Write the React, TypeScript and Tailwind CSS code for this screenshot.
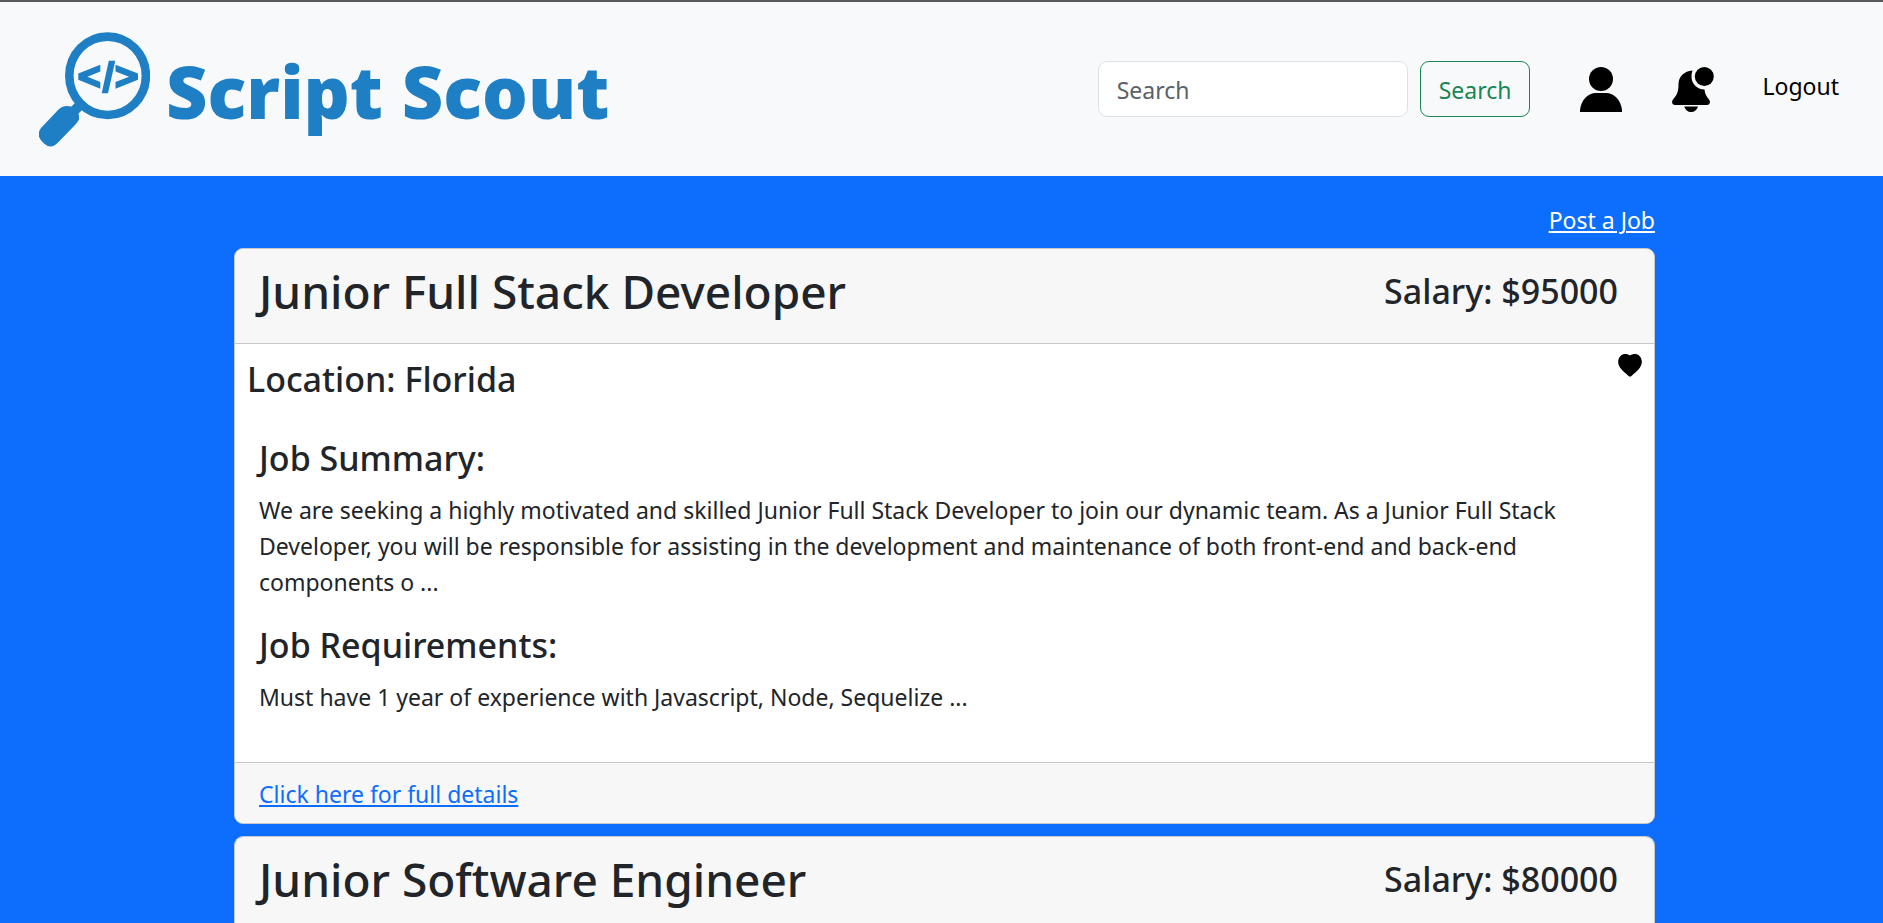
type JobDetails = {
  location: string;
  summary: string;
  requirements: string;
};

type Job = {
  title: string;
  salary: number;
  details?: JobDetails;
};

const jobs: Job[] = [
  {
    title: 'Junior Full Stack Developer',
    salary: 95000,
    details: {
      location: 'Florida',
      summary:
        'We are seeking a highly motivated and skilled Junior Full Stack Developer to join our dynamic team. As a Junior Full Stack Developer, you will be responsible for assisting in the development and maintenance of both front-end and back-end components o ...',
      requirements: 'Must have 1 year of experience with Javascript, Node, Sequelize ...',
    },
  },
  { title: 'Junior Software Engineer', salary: 80000 },
];

function LogoMark() {
  return (
    <svg viewBox="0 0 111 115" className="h-[115px] w-[111px]" fill="none" stroke="#1f7fc4" aria-hidden="true">
      <ellipse cx="68.600" cy="43.800" rx="38.300" ry="39.200" strokeWidth="8.6" />
      <path d="M43 71 L34 80" strokeWidth="10" />
      <path
        d="M19 78 Q25 72 33 75 Q41 80 40 87 Q39.500 89 36 93 L19 110.500 Q12 118 5 111.500 Q-4 104 2 96 Z"
        fill="#1f7fc4"
        stroke="none"
      />
      <g fill="#1f7fc4" stroke="none">
        <path d="M61.300 32.800 V39.500 L48.500 44.700 L61.300 50 V56.800 L39.300 47.800 V41.500 Z" />
        <path d="M76.500 32.800 V39.500 L90 44.700 L76.500 50 V56.800 L99 47.800 V41.500 Z" />
        <path d="M69.800 28.700 H76.300 L69 61.200 H62.700 Z" />
      </g>
    </svg>
  );
}

function PersonIcon() {
  return (
    <svg viewBox="0 0 42 45" className="h-[45px] w-[42px]" aria-hidden="true">
      <circle cx="21" cy="12" r="12" />
      <path d="M0 45 V43 C1 33 8 26 16 26 H26 C34 26 41 33 42 43 V45 Z" />
    </svg>
  );
}

function BellIcon() {
  return (
    <svg viewBox="0 0 42 45" className="h-[45px] w-[42px]" aria-hidden="true">
      <circle cx="32.300" cy="9.500" r="9.500" />
      <path d="M20.500 3.500 C12 4 6.500 10 6.500 17 C6.500 25 5 28 1 32.500 C-1 35 0.500 38 3 38 H35 C37.500 38 39 35 37 32.500 C34.500 29.500 32.800 27 32.500 22.500 C25 22.500 19.500 16.500 19.500 10 C19.500 7.500 19.800 5.500 20.500 3.500 Z" />
      <path d="M12.300 39.500 H26 C25 43 22.500 45 19.200 45 C16 45 13.200 43 12.300 39.500 Z" />
    </svg>
  );
}

function HeartIcon() {
  return (
    <svg viewBox="0 0 24 23" className="h-[23px] w-6" aria-hidden="true">
      <path d="M12 1.600 C15 -0.500 19 -0.500 21.500 2 C24.500 5 24.500 10 22 13.500 C19.500 17 16 19.500 13.500 22 Q12 23.200 10.500 22 C8 19.500 4.500 17 2 13.500 C-0.500 10 -0.500 5 2.500 2 C5 -0.500 9 -0.500 12 1.600 Z" />
    </svg>
  );
}

function JobBody({ details }: { details: JobDetails }) {
  return (
    <>
      <div className="flex items-start justify-between px-3 pt-2.5">
        <h3 className="pt-1 text-[34px] leading-[43px] font-medium">Location: {details.location}</h3>
        <button type="button" aria-label="Save job">
          <HeartIcon />
        </button>
      </div>
      <div className="px-6 pt-9 pb-[47px]">
        <h3 className="mb-3 text-[34px] leading-[43px] font-medium">Job Summary:</h3>
        <p className="mb-6 max-w-[1310px]">{details.summary}</p>
        <h3 className="mb-3 text-[34px] leading-[43px] font-medium">Job Requirements:</h3>
        <p>{details.requirements}</p>
      </div>
      <footer className="border-t border-[#c8c8c8] bg-[#f7f7f7] px-6 pt-[13px] pb-[11px]">
        <a href="#details" className="text-[#0d6efd] underline decoration-2 underline-offset-2">
          Click here for full details
        </a>
      </footer>
    </>
  );
}

function JobCard({ job }: { job: Job }) {
  return (
    <article className="overflow-hidden rounded-[9px] border border-[#c8c8c8] bg-white">
      <header className="flex items-start justify-between border-b border-[#c8c8c8] bg-[#f7f7f7] px-6 pt-[13px] pb-[23px]">
        <h2 className="text-[46px] leading-[58px] font-medium">{job.title}</h2>
        <p className="mr-3 pt-2 text-[34px] leading-[43px] font-medium">Salary: ${job.salary}</p>
      </header>
      {job.details && <JobBody details={job.details} />}
    </article>
  );
}

export default function App() {
  return (
    <div className="min-h-screen bg-[#0d6efd] font-['Noto_Sans',sans-serif] text-[23px] leading-9 text-[#212529]">
      <header className="flex items-center justify-between border-t-2 border-[#5a5a5c] bg-[#f8f9fa] pt-[30px] pr-11 pb-[30px] pl-[39px]">
        <a href="#home" className="flex h-[114px] items-start gap-4">
          <LogoMark />
          <span className="pt-3.5 font-['Open_Sans',sans-serif] text-[72px] leading-[90px] font-extrabold text-[#1f7fc4]">
            Script Scout
          </span>
        </a>
        <div className="flex items-center">
          <form className="mr-[50px] flex gap-3" onSubmit={(e) => e.preventDefault()}>
            <input
              type="search"
              aria-label="Search"
              placeholder="Search"
              className="h-14 w-[310px] rounded-[9px] border border-[#dee2e6] bg-white px-[18px] pt-0.5 placeholder:text-[#5b6167]"
            />
            <button type="submit" className="h-14 rounded-[9px] border border-[#198754] px-[18px] pt-0.5 text-[#198754]">
              Search
            </button>
          </form>
          <a href="#profile" aria-label="Profile" className="mr-[50px] text-black">
            <PersonIcon />
          </a>
          <a href="#alerts" aria-label="Notifications" className="mr-12 text-black">
            <BellIcon />
          </a>
          <a href="#logout" className="pb-1.5 text-black">
            Logout
          </a>
        </div>
      </header>
      <main className="mx-auto box-content max-w-[1421px] pt-[26px] pl-1.5">
        <div className="flex justify-end pb-2.5">
          <a href="#post" className="text-white underline decoration-2 underline-offset-2">
            Post a Job
          </a>
        </div>
        <div className="flex flex-col gap-3">
          {jobs.map((job) => (
            <JobCard key={job.title} job={job} />
          ))}
        </div>
      </main>
    </div>
  );
}
